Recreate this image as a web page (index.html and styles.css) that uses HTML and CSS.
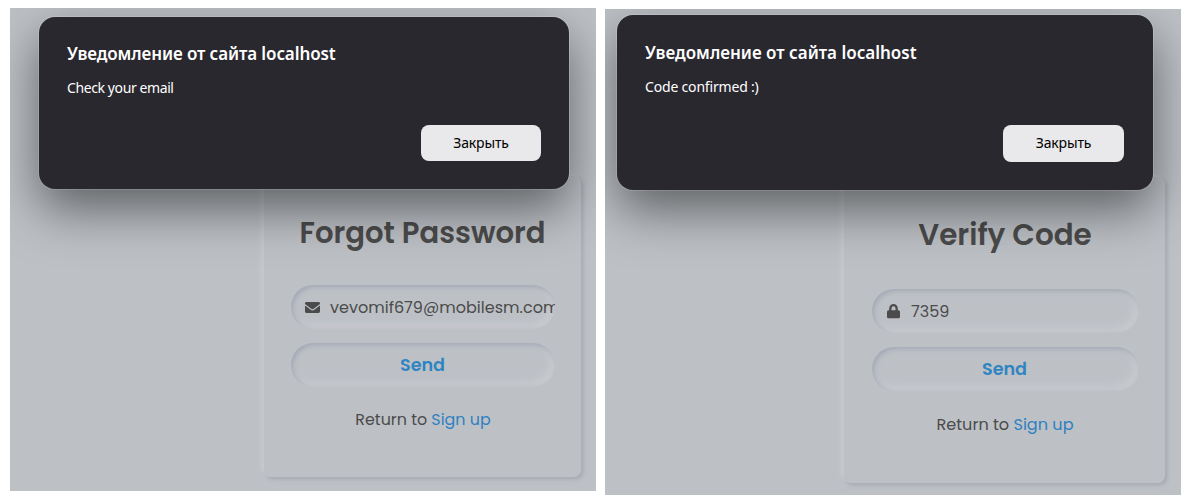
FILE: index.html
```html
<!DOCTYPE html>
<html lang="ru">
<head>
<meta charset="utf-8">
<title>Forgot Password</title>
<link rel="stylesheet" href="styles.css">
</head>
<body>
<main class="screens">
  <section class="screen screen-forgot">
    <div class="card">
      <h1 class="title"><span>Forgot Password</span></h1>
      <div class="field">
        <svg class="icon" width="15" height="12" viewBox="0 0 15 12"><path fill="currentColor" d="M1.4 0h12.2Q15 0 15 1.4v.7L8.7 6.8q-1.2.8-2.4 0L0 2.1v-.7Q0 0 1.4 0zM0 3.6l5.7 4.2q1.8 1.2 3.6 0L15 3.6v6q0 1.4-1.4 1.4H1.4Q0 11 0 9.6z"/></svg>
        <span class="value email">vevomif679@mobilesm.com</span>
      </div>
      <button class="send">Send</button>
      <p class="return"><span>Return to <a class="link">Sign up</a></span></p>
    </div>
    <div class="dialog">
      <h2 class="dialog-title">Уведомление от сайта localhost</h2>
      <p class="dialog-text">Check your email</p>
      <button class="close">Закрыть</button>
    </div>
  </section>
  <section class="screen screen-verify">
    <div class="card">
      <h1 class="title"><span>Verify Code</span></h1>
      <div class="field">
        <svg class="icon" width="13" height="15" viewBox="0 0 13 15"><path fill="currentColor" fill-rule="evenodd" d="M2.2 6.2V4.3a4.3 4.3 0 0 1 8.6 0v1.9h.7Q13 6.2 13 7.700v5Q13 14.200 11.500 14.200h-10Q0 14.200 0 12.700v-5Q0 6.200 1.500 6.200zm2.300 0h4V4.300a2 2 0 0 0-4 0z"/></svg>
        <span class="value">7359</span>
      </div>
      <button class="send">Send</button>
      <p class="return"><span>Return to <a class="link">Sign up</a></span></p>
    </div>
    <div class="dialog">
      <h2 class="dialog-title">Уведомление от сайта localhost</h2>
      <p class="dialog-text">Code confirmed :)</p>
      <button class="close">Закрыть</button>
    </div>
  </section>
</main>
</body>
</html>
```
FILE: styles.css
```css
* { box-sizing: border-box; }

body {
  margin: 0;
  background: #fff;
  font-family: Poppins, Inter, sans-serif;
  overflow: hidden;
}

h1, h2, p { margin: 0; }
button { border: 0; padding: 0; font: inherit; }

.screens {
  display: flex;
  align-items: flex-start;
  gap: 9px;
  padding: 8px 0 0 10px;
}

.screen {
  position: relative;
  overflow: hidden;
  background: #bdc1c6;
  color: #4b4b4b;
}

.screen-forgot {
  width: 586px;
  height: 483px;
  padding: 168px 15px 14px 254px;
}

.screen-verify {
  width: 576px;
  height: 486px;
  margin-top: 1px;
  padding: 168px 16px 12px 239px;
}

.card {
  height: 100%;
  display: flex;
  flex-direction: column;
  padding: 37px 26px 0 27px;
  border-radius: 7px;
  box-shadow: -3px -3px 4px #c9cace, 2px 2px 4px #a4a8ae;
}

.screen-verify .card { padding-top: 38px; padding-left: 28px; }

.title {
  height: 40px;
  padding-right: 1px;
  font-size: 29.100px;
  line-height: 40px;
  font-weight: 600;
  text-align: center;
  white-space: nowrap;
}

.screen-verify .title { font-size: 29.400px; }

.field {
  display: flex;
  align-items: center;
  gap: 10px;
  height: 44px;
  margin-top: 32px;
  padding: 1px 0 0 14px;
  border-radius: 22px;
  font-size: 16px;
}

.screen-verify .field { margin-top: 34px; padding: 0 0 0 15px; gap: 11px; }

.field, .send {
  flex-shrink: 0;
  box-shadow: inset 2px 2px 5px #a3a7b4, inset -4px -4px 9px #cacbcf;
}

.icon { flex: none; }
.value { white-space: nowrap; }

.email {
  flex: 1;
  min-width: 0;
  overflow: hidden;
  letter-spacing: .02px;
}

.send {
  height: 44px;
  margin-top: 14px;
  padding-right: 1px;
  border-radius: 22px;
  background: transparent;
  color: #2f84c2;
  font-size: 17.600px;
  font-weight: 600;
}

.screen-verify .send { margin-top: 14px; padding-right: 2px; }

.return {
  margin-top: 21px;
  font-size: 15.900px;
  line-height: 24px;
  text-align: center;
}

.screen-verify .return { margin-top: 22px; padding-right: 1px; font-size: 16.100px; }
.link { color: #2f80c0; }

.dialog {
  position: absolute;
  display: flex;
  flex-direction: column;
  padding: 25px 28px 28px;
  border-radius: 16px;
  background: #2a282f;
  color: #fff;
  font-family: "Noto Sans", sans-serif;
  box-shadow: 0 0 0 1px rgba(255, 255, 255, .15), 0 20px 50px rgba(0, 0, 0, .5);
}

.screen-forgot .dialog { left: 29px; top: 9px; width: 530px; height: 172px; }
.screen-verify .dialog { left: 12px; top: 6px; width: 536px; height: 175px; padding: 26px 29px 28px 28px; }

.dialog-title {
  font-size: 17px;
  line-height: 24px;
  font-weight: 600;
  letter-spacing: -.1px;
  white-space: nowrap;
}

.screen-verify .dialog-title { letter-spacing: 0; }

.dialog-text {
  margin-top: 12px;
  font-size: 14px;
  line-height: 20px;
  letter-spacing: -.400px;
}

.screen-verify .dialog-text { letter-spacing: -.180px; }

.close {
  align-self: flex-end;
  width: 120px;
  height: 36px;
  margin-top: auto;
  padding-bottom: 2px;
  border-radius: 8px;
  background: #e9e9eb;
  color: #000;
  font-size: 14px;
  letter-spacing: -.150px;
}

.screen-verify .close { width: 121px; height: 37px; }
```
